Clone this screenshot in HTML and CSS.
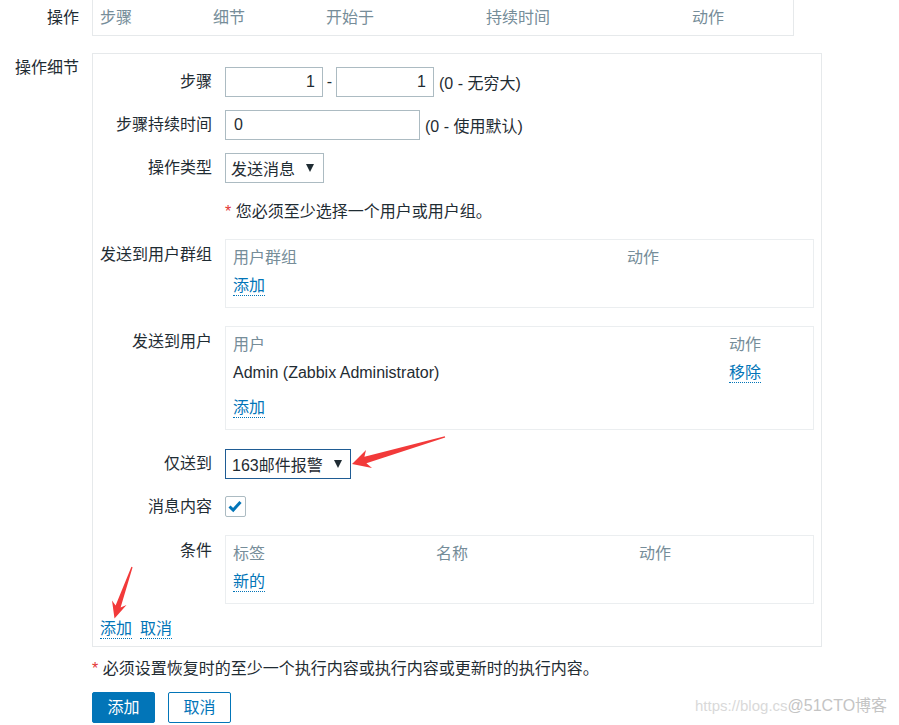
FILE: index.html
```html
<!DOCTYPE html>
<html lang="zh-CN">
<head>
<meta charset="utf-8">
<title>操作细节</title>
<link rel="stylesheet" href="styles.css">
</head>
<body>
<div class="page">
  <div class="row top-row">
    <div class="row-label">操作</div>
    <div class="ops-table">
      <span>步骤</span><span>细节</span><span>开始于</span><span>持续时间</span><span>动作</span>
    </div>
  </div>

  <div class="row detail-row">
    <div class="row-label">操作细节</div>
    <div class="detail-box">
      <div class="frow r-step">
        <div class="flabel">步骤</div>
        <div class="fctl">
          <span class="input num">1</span><span class="dash">-</span><span class="input num">1</span><span class="hint">(0 - 无穷大)</span>
        </div>
      </div>
      <div class="frow r-dur">
        <div class="flabel">步骤持续时间</div>
        <div class="fctl">
          <span class="input wide">0</span><span class="hint">(0 - 使用默认)</span>
        </div>
      </div>
      <div class="frow r-type">
        <div class="flabel">操作类型</div>
        <div class="fctl">
          <span class="select sel-type"><span>发送消息</span><span class="caret"></span></span>
        </div>
      </div>
      <div class="frow r-err">
        <div class="flabel"></div>
        <div class="fctl err"><span><span class="star">*</span> 您必须至少选择一个用户或用户组。</span></div>
      </div>
      <div class="frow r-groups">
        <div class="flabel">发送到用户群组</div>
        <div class="fctl">
          <div class="list-box">
            <div class="lrow head cols-groups"><span>用户群组</span><span>动作</span></div>
            <div class="lrow"><a class="link">添加</a></div>
          </div>
        </div>
      </div>
      <div class="frow r-users">
        <div class="flabel">发送到用户</div>
        <div class="fctl">
          <div class="list-box">
            <div class="lrow head cols-users"><span>用户</span><span>动作</span></div>
            <div class="lrow cols-users"><span class="dark">Admin (Zabbix Administrator)</span><span><a class="link">移除</a></span></div>
            <div class="lrow foot"><a class="link">添加</a></div>
          </div>
        </div>
      </div>
      <div class="frow r-only">
        <div class="flabel">仅送到</div>
        <div class="fctl">
          <span class="select sel-only"><span>163邮件报警</span><span class="caret"></span></span>
        </div>
      </div>
      <div class="frow r-msg">
        <div class="flabel">消息内容</div>
        <div class="fctl">
          <span class="checkbox">
            <svg width="20" height="20" viewBox="0 0 20 20"><path d="M4.5 10.5 L8.2 14 L15.5 6" fill="none" stroke="#0275b8" stroke-width="3"/></svg>
          </span>
        </div>
      </div>
      <div class="frow r-cond">
        <div class="flabel">条件</div>
        <div class="fctl">
          <div class="list-box">
            <div class="lrow head cols-cond"><span>标签</span><span>名称</span><span>动作</span></div>
            <div class="lrow"><a class="link">新的</a></div>
          </div>
        </div>
      </div>
      <div class="links">
        <a class="link">添加</a><a class="link">取消</a>
      </div>
    </div>
  </div>

  <div class="notice"><span class="star">*</span> 必须设置恢复时的至少一个执行内容或执行内容或更新时的执行内容。</div>

  <div class="buttons">
    <span class="btn primary">添加</span><span class="btn secondary">取消</span>
  </div>

  <svg class="arrows" width="899" height="725" viewBox="0 0 899 725">
    <polygon fill="#f23a3a" points="352,464 366,450 364.4,456.8 444.8,436.3 445.2,437.6 366.4,463.2 372,468"/>
    <polygon fill="#f23a3a" points="114.5,618.5 112,600.5 115.6,605.6 131.4,566.8 132.6,567.2 120.6,607.6 126.5,605"/>
  </svg>

  <div class="watermark"><span class="wm-url">https://blog.cs</span><span class="wm-name">@51CTO博客</span></div>
</div>
</body>
</html>
```

FILE: styles.css
```css
* { box-sizing: border-box; }

html, body {
  margin: 0;
  padding: 0;
  background: #ffffff;
}

body {
  font-family: "Liberation Sans", "Noto Sans CJK SC", sans-serif;
  font-size: 16px;
  color: #1f2c33;
}

.page {
  position: relative;
  width: 899px;
  height: 725px;
  overflow: hidden;
}

.row {
  display: flex;
  gap: 13px;
}

.row-label {
  width: 79px;
  text-align: right;
  flex: none;
}

/* top operations table */
.top-row .row-label {
  line-height: 35px;
}

.ops-table {
  width: 702px;
  height: 36px;
  border: 1px solid #e6e9eb;
  border-top: none;
  display: grid;
  grid-template-columns: 113px 113px 160px 206px 1fr;
  padding-left: 7px;
  line-height: 35px;
  color: #768d99;
}

/* detail section */
.detail-row {
  margin-top: 17px;
}

.detail-row .row-label {
  line-height: 30px;
}

.detail-box {
  width: 730px;
  border: 1px solid #e6e9eb;
  padding: 13px 7px 5px 0;
  display: flex;
  flex-direction: column;
}

.frow {
  display: flex;
  gap: 13px;
}

.flabel {
  width: 119px;
  flex: none;
  text-align: right;
  line-height: 30px;
}

.fctl {
  flex: 1;
  display: flex;
  align-items: center;
  min-height: 30px;
}

.r-dur { margin-top: 13px; }
.r-type { margin-top: 13px; }
.r-err { margin-top: 14px; }
.r-groups { margin-top: 12px; }
.r-users { margin-top: 18px; }
.r-only { margin-top: 19px; }
.r-msg { margin-top: 17px; align-items: center; }
.r-msg .flabel { line-height: 20px; }
.r-msg .fctl { min-height: 20px; }
.r-cond { margin-top: 18px; }

.r-groups .flabel,
.r-users .flabel,
.r-cond .flabel {
  padding-top: 1px;
}

.input {
  display: inline-block;
  height: 30px;
  line-height: 28px;
  border: 1px solid #acbbc2;
  background: #fff;
}

.input.num {
  width: 98px;
  text-align: right;
  padding-right: 7px;
}

.input.wide {
  width: 195px;
  padding-left: 8px;
}

.dash {
  width: 13px;
  text-align: center;
}

.hint {
  margin-left: 5px;
}

.select {
  display: inline-flex;
  align-items: center;
  justify-content: space-between;
  height: 30px;
  border: 1px solid #acbbc2;
  background: #fff;
}

.sel-type {
  width: 99px;
  padding: 0 9px 0 5px;
}

.sel-only {
  width: 126px;
  padding: 0 8px 0 6px;
  border-color: #1f5c94;
}

.caret {
  width: 0;
  height: 0;
  border-left: 4px solid transparent;
  border-right: 4px solid transparent;
  border-top: 8px solid #1f2c33;
}

.err {
  line-height: 30px;
}

.star {
  color: #e33734;
}

.list-box {
  width: 589px;
  border: 1px solid #ebeef0;
  padding: 4px 7px 7px;
}

.lrow {
  line-height: 28px;
  height: 28px;
}

.lrow.head {
  color: #768d99;
}

.lrow.foot {
  margin-top: 7px;
}

.cols-groups {
  display: grid;
  grid-template-columns: 394px 1fr;
}

.cols-users {
  display: grid;
  grid-template-columns: 496px 1fr;
}

.cols-cond {
  display: grid;
  grid-template-columns: 203px 203px 1fr;
}

.dark {
  color: #1f2c33;
}

.link {
  color: #0275b8;
  border-bottom: 1px dotted #0275b8;
  text-decoration: none;
  line-height: 19px;
  display: inline-block;
}

.checkbox {
  display: inline-block;
  width: 21px;
  height: 21px;
  border: 1px solid #acbbc2;
  border-radius: 2px;
  background: #fff;
}

.checkbox svg {
  display: block;
  margin: -1px 0 0 -1px;
}

.links {
  margin-top: 13px;
  padding-left: 7px;
  display: flex;
  gap: 8px;
  height: 24px;
  align-items: center;
}

.notice {
  margin: 10px 0 0 92px;
  line-height: 24px;
}

.buttons {
  margin: 11px 0 0 92px;
  display: flex;
  gap: 13px;
}

.btn {
  display: inline-block;
  width: 63px;
  height: 31px;
  line-height: 29px;
  text-align: center;
  border-radius: 2px;
  border: 1px solid #0275b8;
}

.btn.primary {
  background: #0275b8;
  color: #ffffff;
}

.btn.secondary {
  background: #ffffff;
  color: #0275b8;
}

.arrows {
  position: absolute;
  left: 0;
  top: 0;
  pointer-events: none;
}

.watermark {
  position: absolute;
  left: 695px;
  top: 696px;
  font-size: 15px;
  line-height: 20px;
  white-space: nowrap;
}

.wm-url {
  color: #d9d9d9;
}

.wm-name {
  color: #c4c4c4;
  font-size: 16px;
}
```
